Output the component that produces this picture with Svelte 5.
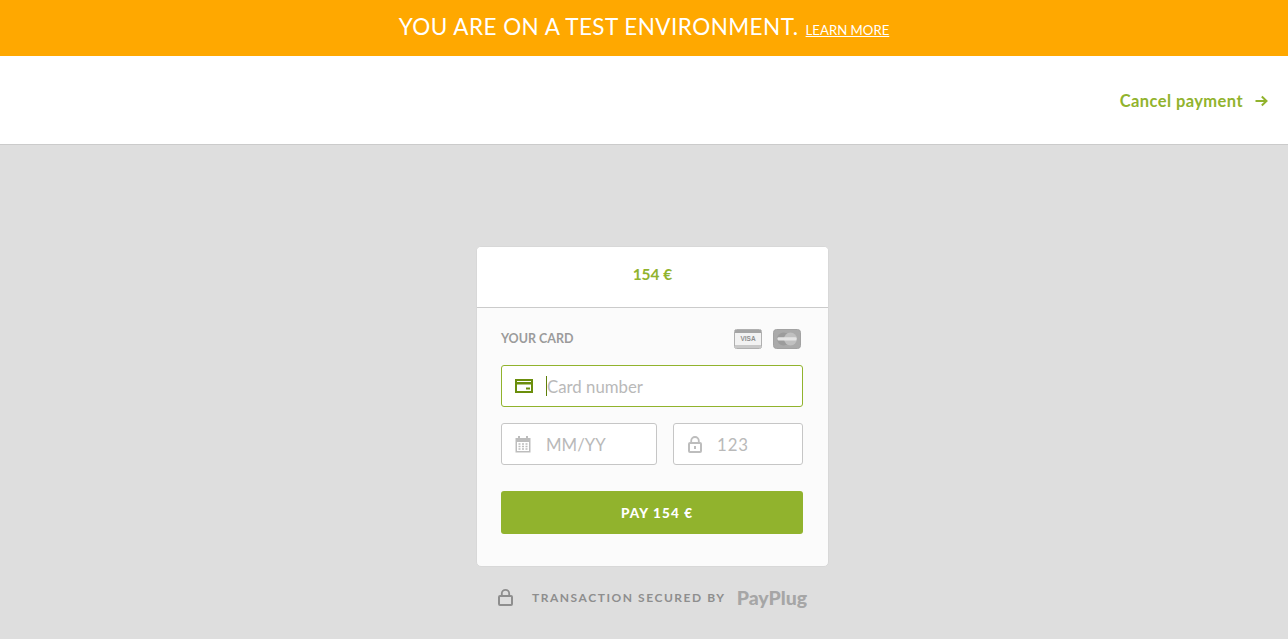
<script>
  const total = '154 €';
</script>

<div class="page">
  <div class="banner">
    <span class="banner-text">YOU ARE ON A TEST ENVIRONMENT.</span>
    <a class="learn" href="#learn">LEARN MORE</a>
  </div>
  <header class="top">
    <a class="cancel" href="#cancel">
      <span>Cancel payment</span>
      <svg width="13" height="12" viewBox="0 0 13 12" fill="none" stroke="#91b32d" stroke-width="2"><path d="M0.5 6H11.5M6.8 1.5L11.5 6L6.8 10.5"/></svg>
    </a>
  </header>
  <main class="main">
    <section class="card">
      <div class="amount">{total}</div>
      <form class="form">
        <div class="label-row">
          <span class="label">YOUR CARD</span>
          <div class="brands">
            <svg width="28" height="20" viewBox="0 0 28 20">
              <rect x="0.5" y="0.5" width="27" height="19" rx="2" fill="#f2f2f2" stroke="#b0b0b0"/>
              <rect x="1" y="1" width="26" height="3" fill="#a4a4a4"/>
              <rect x="1" y="16" width="26" height="3" fill="#c8c8c8"/>
              <text x="14" y="12.4" class="visa" text-anchor="middle">VISA</text>
            </svg>
            <svg width="28" height="20" viewBox="0 0 28 20">
              <rect x="0.5" y="0.5" width="27" height="19" rx="3" fill="#aaaaaa" stroke="#a2a2a2"/>
              <circle cx="10.5" cy="10" r="6.5" fill="#9c9c9c"/>
              <circle cx="17.5" cy="10" r="6.5" fill="#c0c0c0"/>
              <rect x="4.5" y="8.2" width="19" height="3.2" rx="1" fill="#e4e4e4"/>
            </svg>
          </div>
        </div>

        <div class="field focused">
          <svg width="18" height="14" viewBox="0 0 18 14" fill="none">
            <rect x="1" y="1" width="16" height="12" stroke="#6b8e0c" stroke-width="2"/>
            <rect x="1" y="3" width="16" height="2.5" fill="#6b8e0c"/>
            <rect x="11" y="8.5" width="4" height="2" fill="#6b8e0c"/>
          </svg>
          <span class="caret"></span>
          <span class="placeholder">Card number</span>
        </div>

        <div class="split">
          <div class="field date">
            <svg width="16" height="17" viewBox="0 0 16 17" fill="none">
              <rect x="0.5" y="2" width="15" height="14.5" fill="#bdbdbd"/>
              <rect x="3" y="0" width="2" height="3" fill="#bdbdbd"/>
              <rect x="11" y="0" width="2" height="3" fill="#bdbdbd"/>
              <rect x="2" y="6" width="12" height="9" fill="#fff"/>
              <path d="M3.5 8h2M7 8h2M10.5 8h2M3.5 10.5h2M7 10.5h2M10.5 10.5h2M3.5 13h2M7 13h2M10.5 13h2" stroke="#bdbdbd" stroke-width="1.4"/>
            </svg>
            <span class="placeholder">MM/YY</span>
          </div>
          <div class="field cvv">
            <svg width="14" height="17" viewBox="0 0 14 17" fill="none">
              <path d="M3.2 7V4.8a3.8 3.8 0 0 1 7.6 0V7" stroke="#bdbdbd" stroke-width="1.8"/>
              <rect x="1" y="7" width="12" height="9" rx="1" stroke="#bdbdbd" stroke-width="2"/>
              <rect x="6" y="10" width="2" height="3" fill="#bdbdbd"/>
            </svg>
            <span class="placeholder digits">123</span>
          </div>
        </div>

        <button class="pay" type="button">PAY {total}</button>
      </form>
    </section>

    <footer class="secured">
      <svg width="15" height="17" viewBox="0 0 15 17" fill="none">
        <path d="M3.8 7V4.6a3.7 3.7 0 0 1 7.4 0V7" stroke="#8e8e8e" stroke-width="1.8"/>
        <rect x="1" y="7" width="13" height="9" rx="1" stroke="#8e8e8e" stroke-width="2"/>
      </svg>
      <span class="secured-text">TRANSACTION SECURED BY</span>
      <span class="brand">PayPlug</span>
    </footer>
  </main>
</div>

<style>
  :global(body) {
    margin: 0;
    background: #dedede;
  }
  .page {
    height: 639px;
    overflow: hidden;
    font-family: Lato, "Liberation Sans", sans-serif;
    display: flex;
    flex-direction: column;
  }
  .banner {
    height: 56px;
    flex: none;
    background: #ffa800;
    color: #fff;
    display: flex;
    justify-content: center;
    align-items: baseline;
    gap: 7px;
    line-height: 54px;
  }
  .banner-text {
    font-size: 22.5px;
    letter-spacing: 0.45px;
  }
  .learn {
    color: #fff;
    font-size: 13.2px;
    text-decoration: underline;
  }
  .top {
    height: 88px;
    flex: none;
    background: #fff;
    border-bottom: 1px solid #cbcbcb;
    display: flex;
    justify-content: flex-end;
    align-items: center;
    padding-right: 20px;
  }
  .cancel {
    display: flex;
    align-items: center;
    gap: 12px;
    color: #91b32d;
    font-size: 16.5px;
    font-weight: 700;
    letter-spacing: 0.42px;
    text-decoration: none;
    margin-top: 2px;
  }
  .main {
    flex: 1;
    display: flex;
    flex-direction: column;
    align-items: center;
    padding: 101px 0 0 17px;
  }
  .card {
    width: 351px;
    height: 319px;
    border: 1px solid #d8d8d8;
    border-radius: 5px;
    background: #fbfbfb;
    overflow: hidden;
  }
  .amount {
    box-sizing: border-box;
    height: 61px;
    padding-bottom: 6px;
    background: #fff;
    border-bottom: 1px solid #cbcbcb;
    display: flex;
    align-items: center;
    justify-content: center;
    color: #91b32d;
    font-size: 15.5px;
    font-weight: 700;
  }
  .form {
    padding: 20px 25px 0 24px;
    display: flex;
    flex-direction: column;
  }
  .label-row {
    height: 21px;
    display: flex;
    justify-content: space-between;
    align-items: center;
    padding-right: 2px;
  }
  .label {
    font-size: 12.5px;
    font-weight: 700;
    color: #9b9b9b;
  }
  .brands {
    display: flex;
    gap: 11px;
  }
  .visa {
    font: 700 6.5px "Liberation Sans", sans-serif;
    fill: #8e8e8e;
  }
  .field {
    box-sizing: border-box;
    height: 42px;
    background: #fff;
    border: 1px solid #c6c6c6;
    border-radius: 3px;
    display: flex;
    align-items: center;
    padding-left: 13px;
  }
  .field.focused {
    margin-top: 16px;
    border-color: #91b32d;
    width: 302px;
  }
  .caret {
    width: 1px;
    height: 20px;
    background: #5f7f0a;
    margin-left: 13px;
  }
  .placeholder {
    color: #b9b9b9;
    font-size: 16.8px;
  }
  .date svg {
    margin-right: 15px;
  }
  .cvv svg {
    margin-left: 1px;
    margin-right: 15px;
  }
  .digits {
    letter-spacing: 0.9px;
  }
  .split {
    margin-top: 16px;
    display: grid;
    grid-template-columns: 156px 130px;
    gap: 16px;
  }
  .pay {
    margin-top: 26px;
    width: 302px;
    height: 43px;
    border: 0;
    border-radius: 3px;
    background: #91b32d;
    color: #fff;
    font-family: inherit;
    font-size: 13.5px;
    font-weight: 900;
    letter-spacing: 1.1px;
    padding: 0 0 0 10px;
  }
  .secured {
    display: flex;
    align-items: center;
    margin-top: 21px;
    height: 18px;
  }
  .secured-text {
    font-size: 12px;
    font-weight: 700;
    color: #8e8e8e;
    letter-spacing: 1.55px;
    margin-left: 19px;
  }
  .brand {
    font-size: 19.5px;
    font-weight: 900;
    color: #a6a6a6;
    margin-left: 11px;
  }
</style>
